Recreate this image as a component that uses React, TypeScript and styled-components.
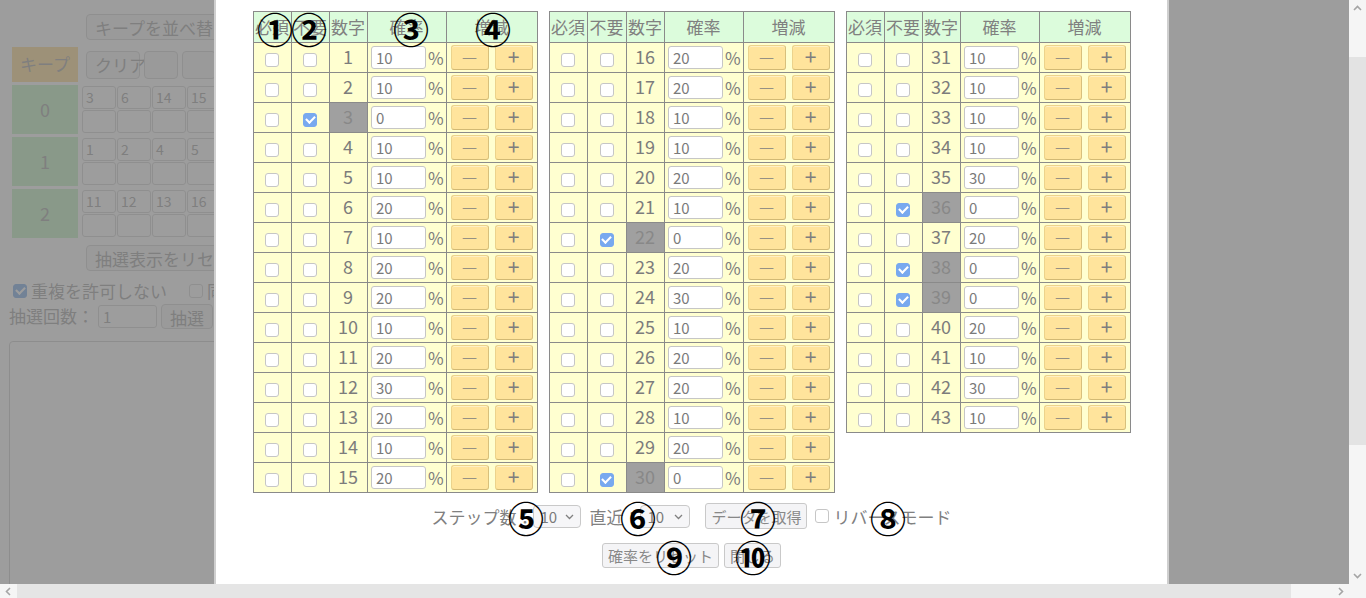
import React from 'react';
import styled, { createGlobalStyle } from 'styled-components';

const GlobalStyle = createGlobalStyle`
  html, body {
    margin: 0;
    padding: 0;
    overflow: hidden;
    background: #fff;
  }
  body {
    font-family: "Noto Sans CJK JP", "Noto Sans", sans-serif;
  }
  * {
    box-sizing: border-box;
  }
`;

const Screen = styled.div`
  width: 1366px;
  height: 598px;
  display: grid;
  grid-template-columns: 1349px 17px;
  grid-template-rows: 584px 14px;
  overflow: hidden;
`;

const Viewport = styled.div`
  position: relative;
  overflow: hidden;
  background: #fff;
`;

/* ---------- page under the modal ---------- */

const BgPage = styled.div`
  display: flex;
  flex-direction: column;
  padding: 14px 0 0 9px;
  color: #808080;
  font-size: 17px;
  line-height: 1.2;
`;

const BgButton = styled.button<{ $w?: number; $h?: number }>`
  height: ${p => p.$h || 26}px;
  ${p => (p.$w ? `width: ${p.$w}px;` : '')}
  padding: 0 8px;
  border: 1px solid #c4c4c4;
  border-radius: 4px;
  background: #f0f0f0;
  color: #808080;
  font-family: inherit;
  font-size: 17px;
  white-space: nowrap;
`;

const BgIndent = styled.div<{ $mt?: number }>`
  margin-top: ${p => p.$mt || 0}px;
  padding-left: 77px;
  display: flex;
`;

const KeepGrid = styled.div`
  margin: 7px 0 0 3px;
  display: grid;
  grid-template-columns: 66px auto;
  column-gap: 4px;
  row-gap: 3px;
`;

const KeepHead = styled.div`
  height: 35px;
  background: #ffcc66;
  display: flex;
  align-items: center;
  justify-content: center;
`;

const KeepControls = styled.div`
  display: flex;
  align-items: center;
  gap: 4px;
  padding-left: 4px;
`;

const GroupLabel = styled.div`
  height: 49px;
  background: #aaeeaa;
  display: flex;
  align-items: center;
  justify-content: center;
  font-size: 18px;
`;

const Boxes = styled.div`
  display: grid;
  grid-template-columns: repeat(4, 34px);
  grid-auto-rows: 23px;
  gap: 1px;
  align-content: center;
`;

const Box = styled.div`
  border: 1px solid #c4c4c4;
  border-radius: 3px;
  font-size: 14px;
  line-height: 20px;
  padding-left: 3px;
`;

const OptionRow = styled.div`
  margin-top: 10px;
  display: flex;
  align-items: center;
  height: 20px;
  gap: 4px;
`;

const BgCheck = styled.span<{ $on?: boolean }>`
  width: 14px;
  height: 14px;
  margin-left: 4px;
  border-radius: 3px;
  border: 1px solid ${p => (p.$on ? '#4c8de0' : '#c4c4c4')};
  background: ${p => (p.$on ? '#4c8de0' : '#fff')};
  display: inline-grid;
  place-content: center;
  &::after {
    content: '';
    display: ${p => (p.$on ? 'block' : 'none')};
    width: 7px;
    height: 4px;
    border-left: 2px solid #fff;
    border-bottom: 2px solid #fff;
    transform: rotate(-45deg) translate(1px, -1px);
  }
`;

const Spacer = styled.span<{ $w: number }>`
  display: inline-block;
  width: ${p => p.$w}px;
`;

const CountRow = styled.div`
  margin-top: 3px;
  display: flex;
  align-items: center;
  gap: 4px;
  height: 25px;
`;

const BgInput = styled.div`
  width: 59px;
  height: 23px;
  border: 1px solid #c4c4c4;
  border-radius: 3px;
  font-size: 15px;
  line-height: 21px;
  padding-left: 4px;
`;

const BigBox = styled.div`
  margin-top: 12px;
  width: 700px;
  height: 400px;
  border: 1px solid #bdbdbd;
  border-radius: 4px;
`;

/* ---------- modal ---------- */

const Backdrop = styled.div`
  position: absolute;
  inset: 0;
  background: rgba(126, 126, 126, 0.76);
`;

const Modal = styled.div`
  position: relative;
  margin-left: 214px;
  width: 955px;
  height: 100%;
  background: #fff;
  border-left: 2px solid #cfcfcf;
  border-right: 2px solid #cfcfcf;
  padding-top: 11px;
  display: flex;
  flex-direction: column;
  align-items: center;
  color: #808080;
`;

const TablesRow = styled.div`
  display: flex;
  align-items: flex-start;
  gap: 11px;
`;

const Table = styled.table<{ $w: number }>`
  border-collapse: collapse;
  table-layout: fixed;
  width: ${p => p.$w}px;
  font-size: 17px;
  color: #808080;
`;

const Th = styled.th`
  background: #dcfcdc;
  border: 1px solid #8a8a8a;
  height: 31px;
  padding: 0 0 1px;
  font-weight: 400;
  line-height: 1;
  white-space: nowrap;
  overflow: hidden;
`;

const Td = styled.td<{ $off?: boolean; $num?: boolean }>`
  background: ${p => (p.$off ? '#a0a0a0' : '#ffffd0')};
  color: ${p => (p.$off ? '#888' : '#7c7c7c')};
  border: 1px solid #8a8a8a;
  height: 30px;
  padding: 0 0 ${p => (p.$num ? 3 : 0)}px;
  text-align: center;
  vertical-align: middle;
  line-height: 1;
  font-size: 18px;
`;

const Check = styled.input.attrs({ type: 'checkbox' })`
  appearance: none;
  margin: 0;
  width: 14px;
  height: 14px;
  border: 1px solid #c6c6c6;
  border-radius: 3px;
  background: #fff;
  display: inline-grid;
  place-content: center;
  vertical-align: middle;
  &:checked {
    background: #78a9ef;
    border-color: #78a9ef;
  }
  &:checked::after {
    content: '';
    width: 7px;
    height: 4px;
    border-left: 2px solid #fff;
    border-bottom: 2px solid #fff;
    transform: rotate(-45deg) translate(1px, -1px);
  }
`;

const ProbCell = styled.div`
  display: flex;
  align-items: center;
  justify-content: center;
  gap: 2px;
`;

const ProbInput = styled.input`
  width: 55px;
  height: 23px;
  border: 1px solid #c6c6c6;
  border-radius: 3px;
  padding: 0 0 0 4px;
  font-family: inherit;
  font-size: 15px;
  color: #7a7a7a;
  background: #fff;
`;

const Percent = styled.span`
  font-size: 17px;
  width: 14px;
`;

const StepCell = styled.div`
  display: flex;
  align-items: center;
  justify-content: center;
  gap: 6px;
`;

const StepButton = styled.button<{ $plus?: boolean }>`
  width: 38px;
  height: 25px;
  padding: 0 0 ${p => (p.$plus ? 2 : 1)}px;
  border: 1px solid #ecd38c;
  border-bottom-color: #d2b974;
  border-right-color: #d8c07c;
  border-radius: 3px;
  background: #ffe49c;
  box-shadow: inset 0 1px 0 #fff0c4;
  color: #7e7e7e;
  font-family: inherit;
  font-size: ${p => (p.$plus ? 21 : 16)}px;
  font-weight: 400;
  line-height: 1;
`;

const ControlRow = styled.div<{ $mt: number }>`
  margin-top: ${p => p.$mt}px;
  display: flex;
  align-items: center;
  justify-content: center;
  height: 26px;
  font-size: 17px;
  line-height: 1;
  color: #808080;
  white-space: nowrap;
`;

const Gap = styled.span<{ $w: number }>`
  display: inline-block;
  width: ${p => p.$w}px;
`;

const SelectWrap = styled.span`
  position: relative;
  display: inline-flex;
`;

const Select = styled.select<{ $w: number }>`
  appearance: none;
  width: ${p => p.$w}px;
  height: 23px;
  border: 1px solid #c9c9c9;
  border-radius: 4px;
  background: #f6f6f8;
  padding: 0 0 0 6px;
  font-family: inherit;
  font-size: 15px;
  color: #7a7a7a;
`;

const SelectChevron = styled.svg`
  position: absolute;
  right: 7px;
  top: 9px;
  pointer-events: none;
`;

const CtrlButton = styled.button<{ $h?: number }>`
  height: ${p => p.$h || 26}px;
  padding: 0 5px;
  border: 1px solid #c9c9c9;
  border-radius: 3px;
  background: #f4f4f6;
  color: #888;
  font-family: inherit;
  font-size: 15px;
  white-space: nowrap;
`;

const Marker = styled.span<{ $x: number; $y: number }>`
  position: absolute;
  left: ${p => p.$x}px;
  top: ${p => p.$y}px;
  transform: translate(-50%, -50%);
  font-family: "Noto Sans CJK JP", sans-serif;
  font-size: 36px;
  font-weight: 700;
  line-height: 1;
  color: #000;
  pointer-events: none;
`;

/* ---------- scrollbars ---------- */

const VScroll = styled.div`
  background: #f5f5f5;
  display: flex;
  flex-direction: column;
`;

const HScroll = styled.div`
  grid-column: 1 / span 2;
  background: #f5f5f5;
  display: flex;
`;

const ArrowBox = styled.div<{ $w?: number; $h?: number }>`
  flex: none;
  width: ${p => p.$w || 17}px;
  height: ${p => p.$h || 17}px;
  display: flex;
  align-items: center;
  justify-content: center;
`;

const VThumb = styled.div`
  margin-top: 40px;
  height: 388px;
  background: #e3e3e3;
`;

const HThumb = styled.div`
  width: 1274px;
  background: #e5e5e5;
`;

const Fill = styled.div`
  flex: 1;
`;

const Chevron = ({ dir }: { dir: 'up' | 'down' | 'left' | 'right' }) => {
  const rot = { up: 0, right: 90, down: 180, left: 270 }[dir];
  return (
    <svg width="9" height="9" viewBox="0 0 9 9" style={{ transform: `rotate(${rot}deg)` }}>
      <path d="M1 6 L4.5 2.5 L8 6" fill="none" stroke="#a5a5a5" strokeWidth="1.6" />
    </svg>
  );
};

/* ---------- data ---------- */

type Row = { n: number; p: number; off?: boolean };

const mk = (start: number, probs: number[], offs: number[]): Row[] =>
  probs.map((p, i) => ({ n: start + i, p, off: offs.includes(start + i) }));

const table1 = mk(1, [10, 10, 0, 10, 10, 20, 10, 20, 20, 10, 20, 30, 20, 10, 20], [3]);
const table2 = mk(16, [20, 20, 10, 10, 20, 10, 0, 20, 30, 10, 20, 20, 10, 20, 0], [22, 30]);
const table3 = mk(31, [10, 10, 10, 10, 30, 0, 20, 0, 0, 20, 10, 30, 10], [36, 38, 39]);

const groups = [
  { label: '0', nums: ['3', '6', '14', '15'] },
  { label: '1', nums: ['1', '2', '4', '5'] },
  { label: '2', nums: ['11', '12', '13', '16'] },
];

function ProbTable({ rows, w }: { rows: Row[]; w: number }) {
  return (
    <Table $w={w}>
      <colgroup>
        <col style={{ width: 38 }} />
        <col style={{ width: w === 285 ? 39 : 38 }} />
        <col style={{ width: 38 }} />
        <col style={{ width: 79 }} />
        <col style={{ width: 91 }} />
      </colgroup>
      <thead>
        <tr>
          <Th>必須</Th>
          <Th>不要</Th>
          <Th>数字</Th>
          <Th>確率</Th>
          <Th>増減</Th>
        </tr>
      </thead>
      <tbody>
        {rows.map(r => (
          <tr key={r.n}>
            <Td><Check /></Td>
            <Td><Check defaultChecked={r.off} /></Td>
            <Td $off={r.off} $num>{r.n}</Td>
            <Td>
              <ProbCell>
                <ProbInput defaultValue={String(r.p)} />
                <Percent>%</Percent>
              </ProbCell>
            </Td>
            <Td>
              <StepCell>
                <StepButton>―</StepButton>
                <StepButton $plus>+</StepButton>
              </StepCell>
            </Td>
          </tr>
        ))}
      </tbody>
    </Table>
  );
}

function StepSelect({ w }: { w: number }) {
  return (
    <SelectWrap>
      <Select $w={w} defaultValue="10">
        <option value="10">10</option>
        <option value="20">20</option>
      </Select>
      <SelectChevron width="9" height="6" viewBox="0 0 9 6">
        <path d="M1 1 L4.5 4.5 L8 1" fill="none" stroke="#808080" strokeWidth="1.3" />
      </SelectChevron>
    </SelectWrap>
  );
}

export default function App() {
  return (
    <>
      <GlobalStyle />
      <Screen>
        <Viewport>
          <BgPage>
            <BgIndent>
              <BgButton>キープを並べ替え</BgButton>
            </BgIndent>
            <KeepGrid>
              <KeepHead>キープ</KeepHead>
              <KeepControls>
                <BgButton $h={28} $w={54}>クリア</BgButton>
                <BgButton $h={28} $w={34} />
                <BgButton $h={28} $w={34} />
              </KeepControls>
              {groups.map(g => (
                <React.Fragment key={g.label}>
                  <GroupLabel>{g.label}</GroupLabel>
                  <Boxes>
                    {g.nums.map(n => <Box key={n}>{n}</Box>)}
                    {g.nums.map(n => <Box key={'e' + n} />)}
                  </Boxes>
                </React.Fragment>
              ))}
            </KeepGrid>
            <BgIndent $mt={7}>
              <BgButton>抽選表示をリセット</BgButton>
            </BgIndent>
            <OptionRow>
              <BgCheck $on />
              <span>重複を許可しない</span>
              <Spacer $w={10} />
              <BgCheck />
              <span>同時に表示</span>
            </OptionRow>
            <CountRow>
              <span>抽選回数：</span>
              <BgInput>1</BgInput>
              <BgButton $h={25}>抽選</BgButton>
              <span>済</span>
            </CountRow>
            <BigBox />
          </BgPage>

          <Backdrop>
            <Modal>
              <TablesRow>
                <ProbTable rows={table1} w={284} />
                <ProbTable rows={table2} w={285} />
                <ProbTable rows={table3} w={284} />
              </TablesRow>

              <ControlRow $mt={10}>
                <span>ステップ数：</span>
                <StepSelect w={48} />
                <Gap $w={8} />
                <span>直近：</span>
                <StepSelect w={50} />
                <Gap $w={15} />
                <CtrlButton>データを取得</CtrlButton>
                <Gap $w={8} />
                <Check />
                <Gap $w={4} />
                <span>リバースモード</span>
              </ControlRow>

              <ControlRow $mt={13}>
                <CtrlButton $h={25}>確率をリセット</CtrlButton>
                <Gap $w={5} />
                <CtrlButton $h={25}>閉じる</CtrlButton>
              </ControlRow>

              <Marker $x={59} $y={28}>①</Marker>
              <Marker $x={93} $y={28}>②</Marker>
              <Marker $x={195} $y={28}>③</Marker>
              <Marker $x={277} $y={28}>④</Marker>
              <Marker $x={310} $y={517}>⑤</Marker>
              <Marker $x={422} $y={517}>⑥</Marker>
              <Marker $x={542} $y={517}>⑦</Marker>
              <Marker $x={672} $y={517}>⑧</Marker>
              <Marker $x={458} $y={556}>⑨</Marker>
              <Marker $x={537} $y={556}>⑩</Marker>
            </Modal>
          </Backdrop>
        </Viewport>

        <VScroll>
          <ArrowBox><Chevron dir="up" /></ArrowBox>
          <VThumb />
          <Fill />
          <ArrowBox><Chevron dir="down" /></ArrowBox>
        </VScroll>

        <HScroll>
          <ArrowBox $h={14}><Chevron dir="left" /></ArrowBox>
          <HThumb />
          <Fill />
          <ArrowBox $h={14}><Chevron dir="right" /></ArrowBox>
          <ArrowBox $h={14} />
        </HScroll>
      </Screen>
    </>
  );
}
